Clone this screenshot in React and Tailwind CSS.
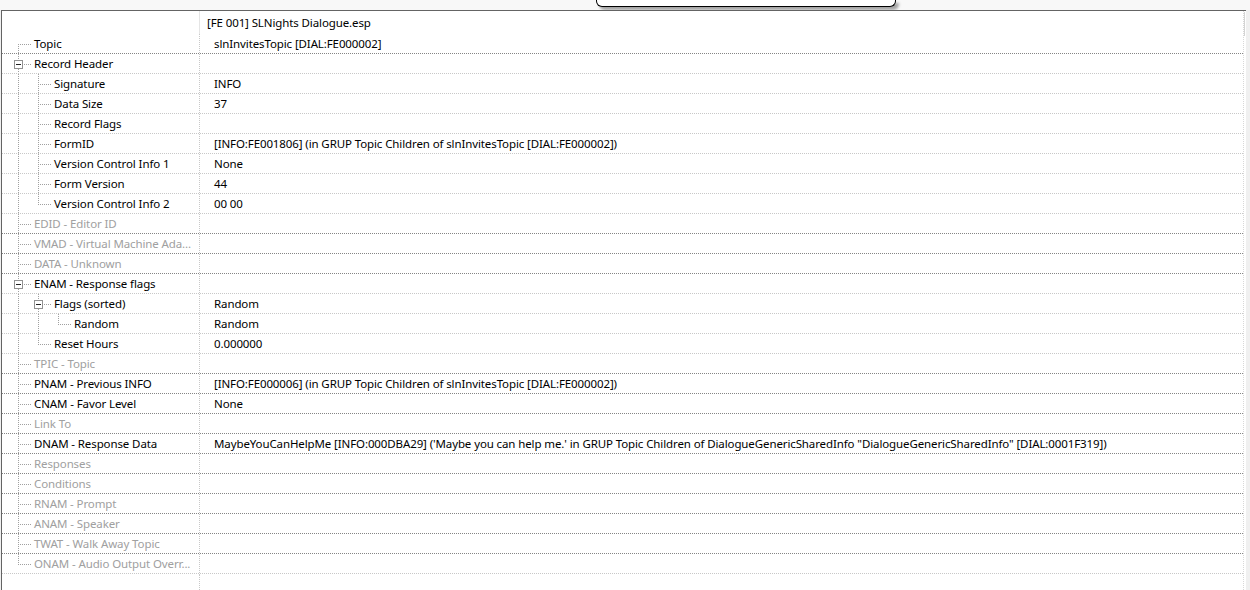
// xEdit-style record view: two-column tree with dotted guide lines
const TREE = [
  { label: 'Topic', value: 'slnInvitesTopic [DIAL:FE000002]' },
  {
    label: 'Record Header',
    children: [
      { label: 'Signature', value: 'INFO' },
      { label: 'Data Size', value: '37' },
      { label: 'Record Flags', value: '' },
      { label: 'FormID', value: '[INFO:FE001806] (in GRUP Topic Children of slnInvitesTopic [DIAL:FE000002])' },
      { label: 'Version Control Info 1', value: 'None' },
      { label: 'Form Version', value: '44' },
      { label: 'Version Control Info 2', value: '00 00' },
    ],
  },
  { label: 'EDID - Editor ID', off: true },
  { label: 'VMAD - Virtual Machine Ada...', off: true },
  { label: 'DATA - Unknown', off: true },
  {
    label: 'ENAM - Response flags',
    children: [
      { label: 'Flags (sorted)', value: 'Random', children: [{ label: 'Random', value: 'Random' }] },
      { label: 'Reset Hours', value: '0.000000' },
    ],
  },
  { label: 'TPIC - Topic', off: true },
  { label: 'PNAM - Previous INFO', value: '[INFO:FE000006] (in GRUP Topic Children of slnInvitesTopic [DIAL:FE000002])' },
  { label: 'CNAM - Favor Level', value: 'None' },
  { label: 'Link To', off: true },
  {
    label: 'DNAM - Response Data',
    value:
      'MaybeYouCanHelpMe [INFO:000DBA29] (\'Maybe you can help me.\' in GRUP Topic Children of DialogueGenericSharedInfo "DialogueGenericSharedInfo" [DIAL:0001F319])',
  },
  { label: 'Responses', off: true },
  { label: 'Conditions', off: true },
  { label: 'RNAM - Prompt', off: true },
  { label: 'ANAM - Speaker', off: true },
  { label: 'TWAT - Walk Away Topic', off: true },
  { label: 'ONAM - Audio Output Overr...', off: true },
];

function flatten(nodes, level = 0, guides = [], out = []) {
  nodes.forEach((n, i) => {
    const last = i === nodes.length - 1;
    out.push({ ...n, level, guides, last, first: level === 0 && i === 0 });
    if (n.children) flatten(n.children, level + 1, [...guides, !last], out);
  });
  return out;
}

const ROWS = flatten(TREE);
const LINE = '#a0a0a0';

function Guides({ row }) {
  const { level, guides, last, first, children } = row;
  const w = 29 + 20 * level;
  const c = 16 + 20 * level + 0.5;
  const dash = { stroke: LINE, strokeDasharray: '1 1', shapeRendering: 'crispEdges' };
  return (
    <svg width={w} height={19} className="shrink-0">
      {guides.map((on, j) =>
        on ? <line key={j} x1={16 + 20 * j + 0.5} y1={0} x2={16 + 20 * j + 0.5} y2={19} {...dash} /> : null
      )}
      {children ? (
        <>
          {!first && <line x1={c} y1={0} x2={c} y2={6} {...dash} />}
          {!last && <line x1={c} y1={15} x2={c} y2={19} {...dash} />}
          <rect x={c - 4} y={6.5} width={8} height={8} fill="#fff" stroke="#919191" shapeRendering="crispEdges" />
          <line x1={c - 2.5} y1={10.5} x2={c + 2.5} y2={10.5} stroke="#222" shapeRendering="crispEdges" />
          <line x1={c + 5} y1={10.5} x2={w} y2={10.5} {...dash} />
        </>
      ) : (
        <>
          <line x1={c} y1={first ? 10 : 0} x2={c} y2={last ? 11 : 19} {...dash} />
          <line x1={c + 1} y1={10.5} x2={w} y2={10.5} {...dash} />
        </>
      )}
    </svg>
  );
}

function Row({ row, next }) {
  const dark = row.level === 0 && !row.children && next;
  return (
    <div
      className={`flex h-[20px] border-b border-dotted ${dark ? 'border-[#858585]' : 'border-[#c8c8c8]'}`}
    >
      <div className="w-[198px] shrink-0 flex items-center border-r border-dotted border-[#c8c8c8] overflow-hidden">
        <Guides row={row} />
        <span className={`ml-[3px] pt-px whitespace-nowrap ${row.off ? 'text-[#a0a0a0]' : 'text-black'}`}>
          {row.label}
        </span>
      </div>
      <div className="flex-1 flex items-center pl-[14px] pt-px whitespace-nowrap overflow-hidden text-black">
        {row.value}
      </div>
    </div>
  );
}

export default function App() {
  return (
    <div
      className="w-[1250px] h-[590px] overflow-hidden bg-[#f0f0f0] flex flex-col text-[11.5px] tracking-[-0.11px] leading-none"
      style={{ fontFamily: '"Noto Sans", "Open Sans", sans-serif' }}
    >
      <div className="h-[10px] shrink-0 bg-[#f8f8f8] flex">
        <div className="ml-[596px] w-[300px] h-[7px] bg-white border-x-[1.5px] border-b-[1.5px] border-black rounded-b-[6px] shadow-[3px_3px_3px_rgba(0,0,0,0.35)]" />
      </div>
      <div className="flex-1 ml-[1px] w-[1245px] bg-white border-l border-t border-[#646464] flex">
        <div className="flex-1 flex flex-col border-r border-dotted border-[#d8d8d8]">
          <div className="flex h-[23px] shrink-0">
            <div className="w-[198px] shrink-0 border-r border-[#e5e5e5]" />
            <div className="flex-1 flex items-center pl-[7px] pt-px text-black">[FE 001] SLNights Dialogue.esp</div>
          </div>
          {ROWS.map((r, i) => (
            <Row key={i} row={r} next={i < ROWS.length - 1} />
          ))}
          <div className="flex-1 flex">
            <div className="w-[198px] shrink-0 border-r border-dotted border-[#c8c8c8]" />
          </div>
        </div>
        <div className="w-[2px] shrink-0 flex flex-col pt-[1px]">
          <div className="h-[24px] w-[1px] bg-[#d4d4d4]" />
        </div>
      </div>
    </div>
  );
}
